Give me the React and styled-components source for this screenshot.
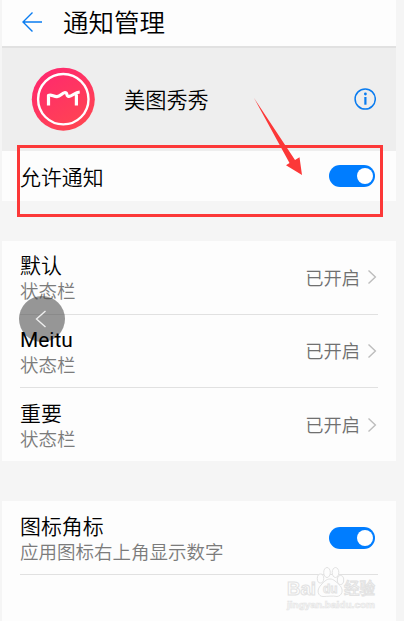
import React from 'react'
import styled, { createGlobalStyle } from 'styled-components'

const GlobalStyle = createGlobalStyle`
  body {
    margin: 0;
    background-color: #f5f5f5;
    font-family: Roboto, 'Noto Sans CJK SC', sans-serif;
    font-weight: 350;
  }
`

const Screen = styled.div`
  position: relative;
  display: flex;
  flex-direction: column;
  box-sizing: border-box;
  width: 404px;
  height: 621px;
  padding: 0 8px 0 2px;
  overflow: hidden;
`

const Header = styled.header`
  display: flex;
  align-items: center;
  gap: 20px;
  box-sizing: border-box;
  height: 48px;
  padding: 0 0 3px 20px;
  background-color: #fdfdfd;
  border-bottom: 2px solid #e1e1e1;
`

const Title = styled.h1`
  margin: 0;
  padding-top: 2px;
  font-size: 25.5px;
  font-weight: 350;
  line-height: 30px;
  color: #000;
`

const AppStrip = styled.section`
  display: flex;
  align-items: center;
  box-sizing: border-box;
  height: 103px;
  padding: 0 20px 2px 29px;
  background-color: #eee;
`

const AppName = styled.div`
  flex: 1;
  margin-left: 29px;
  padding-top: 4px;
  font-size: 21.2px;
  line-height: 26px;
  color: #000;
`

const Group = styled.section`
  flex: ${props => (props.$fill ? 1 : 'none')};
  margin-bottom: ${props => (props.$fill ? 0 : '40px')};
  padding: 0 18px;
  background-color: #fdfdfd;
`

const Row = styled.div`
  display: flex;
  align-items: center;
  justify-content: space-between;
  box-sizing: border-box;
  height: ${props => props.$height}px;
  padding-right: ${props => props.$inset || 0}px;
  border-bottom: ${props => (props.$line ? '1px solid #e1e1e1' : 'none')};
`

const Label = styled.div`
  padding-top: ${props => (props.$single ? 3 : 5)}px;
`

const Name = styled.div`
  font-size: 20.9px;
  font-weight: ${props => (props.$latin ? 400 : 350)};
  line-height: 26px;
  color: #000;
`

const Detail = styled.div`
  font-size: 18.5px;
  line-height: 27px;
  color: #7b7b7b;
`

const Status = styled.div`
  display: flex;
  align-items: center;
  gap: 7px;
  font-size: 18.3px;
  line-height: 26px;
  color: #707070;

  span {
    padding-top: 3px;
  }
`

const Switch = styled.div`
  display: flex;
  justify-content: flex-end;
  box-sizing: border-box;
  width: 46px;
  height: 22px;
  padding: 3px 2px;
  border-radius: 11px;
  background-color: #007dff;

  &::after {
    content: '';
    width: 16px;
    height: 16px;
    border-radius: 50%;
    background-color: #fff;
  }
`

const BackBubble = styled.div`
  position: absolute;
  left: 19px;
  top: 296px;
  display: flex;
  align-items: center;
  justify-content: center;
  box-sizing: border-box;
  width: 46px;
  height: 46px;
  padding-right: 2px;
  border-radius: 50%;
  background-color: rgba(70, 70, 70, 0.56);
`

/* keeps the channel name readable over the floating button */
const FrontName = styled(Name)`
  position: relative;
  z-index: 1;
`

const Highlight = styled.div`
  position: absolute;
  left: 17px;
  top: 145px;
  box-sizing: border-box;
  width: 366px;
  height: 72px;
  border: 3px solid #fc3838;
`

const Pointer = styled.svg`
  position: absolute;
  left: 250px;
  top: 94px;
`

const Watermark = styled.svg`
  position: absolute;
  left: 280px;
  top: 562px;
  font-family: 'Liberation Sans', 'Noto Sans CJK SC', sans-serif;
  font-weight: 700;
`

function BackArrow() {
  return (
    <svg width="21" height="22" viewBox="0 0 21 22" fill="none" stroke="#0a7cf0" strokeWidth="1.4">
      <path d="M10.5 1.5 L1 11 L10.5 20.5 M1 11 H20" />
    </svg>
  )
}

function MeituLogo() {
  return (
    <svg width="64" height="64" viewBox="0 0 64 64" fill="none">
      <defs>
        <linearGradient id="meitu" x1="0.2" y1="0" x2="0.8" y2="1">
          <stop offset="0" stopColor="#ff286f" />
          <stop offset="1" stopColor="#ff4650" />
        </linearGradient>
      </defs>
      <circle cx="32.3" cy="32.2" r="31.5" fill="url(#meitu)" />
      <circle cx="32.3" cy="32.2" r="25.2" stroke="#fff" strokeWidth="2.4" />
      <path
        d="M17.5 38.5 V28.5 C20.5 27 22.5 29.8 26 29.6 C29.5 29.4 31 25.8 34 25.5 C37 25.5 34.8 29.8 38 29.4 C41.5 29 43.8 25.4 48.7 25 M45.4 38.5 V27.5"
        stroke="#fff"
        strokeWidth="3.2"
        strokeLinejoin="round"
      />
    </svg>
  )
}

function InfoIcon() {
  return (
    <svg width="22" height="22" viewBox="0 0 22 22" fill="none" stroke="#0a7cf0">
      <circle cx="11.2" cy="11" r="10.1" strokeWidth="1.5" />
      <path d="M11.4 9 V16.7" strokeWidth="2.2" />
      <circle cx="11.4" cy="6" r="1.4" fill="#0a7cf0" stroke="none" />
    </svg>
  )
}

function Chevron() {
  return (
    <svg width="11" height="16" viewBox="0 0 11 16" fill="none" stroke="#bdbdbd" strokeWidth="1.4">
      <path d="M1.5 1.4 L8.4 8 L1.5 14.6" />
    </svg>
  )
}

const channels = ['默认', 'Meitu', '重要']

function App() {
  return (
    <Screen>
      <GlobalStyle />
      <Header>
        <BackArrow />
        <Title>通知管理</Title>
      </Header>
      <AppStrip>
        <MeituLogo />
        <AppName>美图秀秀</AppName>
        <InfoIcon />
      </AppStrip>
      <Group>
        <Row $height={50} $inset={3}>
          <Label $single>
            <Name>允许通知</Name>
          </Label>
          <Switch />
        </Row>
      </Group>
      <Group>
        {channels.map((name, i) => (
          <Row key={name} $height={i < 2 ? 73.5 : 73} $line={i < 2}>
            <Label>
              <FrontName $latin={name === 'Meitu'}>{name}</FrontName>
              <Detail>状态栏</Detail>
            </Label>
            <Status>
              <span>已开启</span>
              <Chevron />
            </Status>
          </Row>
        ))}
      </Group>
      <Group $fill>
        <Row $height={74} $inset={3} $line>
          <Label>
            <Name>图标角标</Name>
            <Detail>应用图标右上角显示数字</Detail>
          </Label>
          <Switch />
        </Row>
      </Group>

      <BackBubble>
        <svg width="12" height="18" viewBox="0 0 12 18" fill="none" stroke="#eee" strokeWidth="1.4">
          <path d="M10.5 1 L1.5 9 L10.5 17" />
        </svg>
      </BackBubble>
      <Highlight />
      <Pointer width="54" height="84" viewBox="0 0 54 84">
        <path d="M4 4 L45 66 L49.5 63.2 L52 81 L36 71.3 L39.5 69 Z" fill="#fc3838" />
      </Pointer>
      <Watermark width="105" height="50" viewBox="0 0 105 50" fill="#fdfdfd" stroke="#e2e2e2" strokeWidth="1">
        <text x="7" y="32.5" fontSize="18.5" textLength="29" lengthAdjust="spacingAndGlyphs">Bai</text>
        <ellipse cx="40.5" cy="16.5" rx="3.2" ry="4.5" />
        <ellipse cx="47" cy="10.5" rx="3.3" ry="5" />
        <ellipse cx="55.5" cy="10.5" rx="3.3" ry="5" />
        <ellipse cx="60.5" cy="18" rx="3.2" ry="4.5" />
        <path d="M50 17 C46 17 44 20 41 23 C36 28 38 34.5 43 34.5 C47 34.5 53 33.5 57 34.5 C62 34 64 28 60 23.5 C56 20 54 17 50 17 Z" />
        <text x="43" y="31" fontSize="13" textLength="14.5" lengthAdjust="spacingAndGlyphs">du</text>
        <text x="64" y="32" fontSize="15.5" fontWeight="500" textLength="31">经验</text>
        <text x="7" y="45.5" fontSize="9.5" textLength="88" lengthAdjust="spacingAndGlyphs" strokeWidth="0.7" stroke="#e6e6e6">jingyan.baidu.com</text>
      </Watermark>
    </Screen>
  )
}

export default App
